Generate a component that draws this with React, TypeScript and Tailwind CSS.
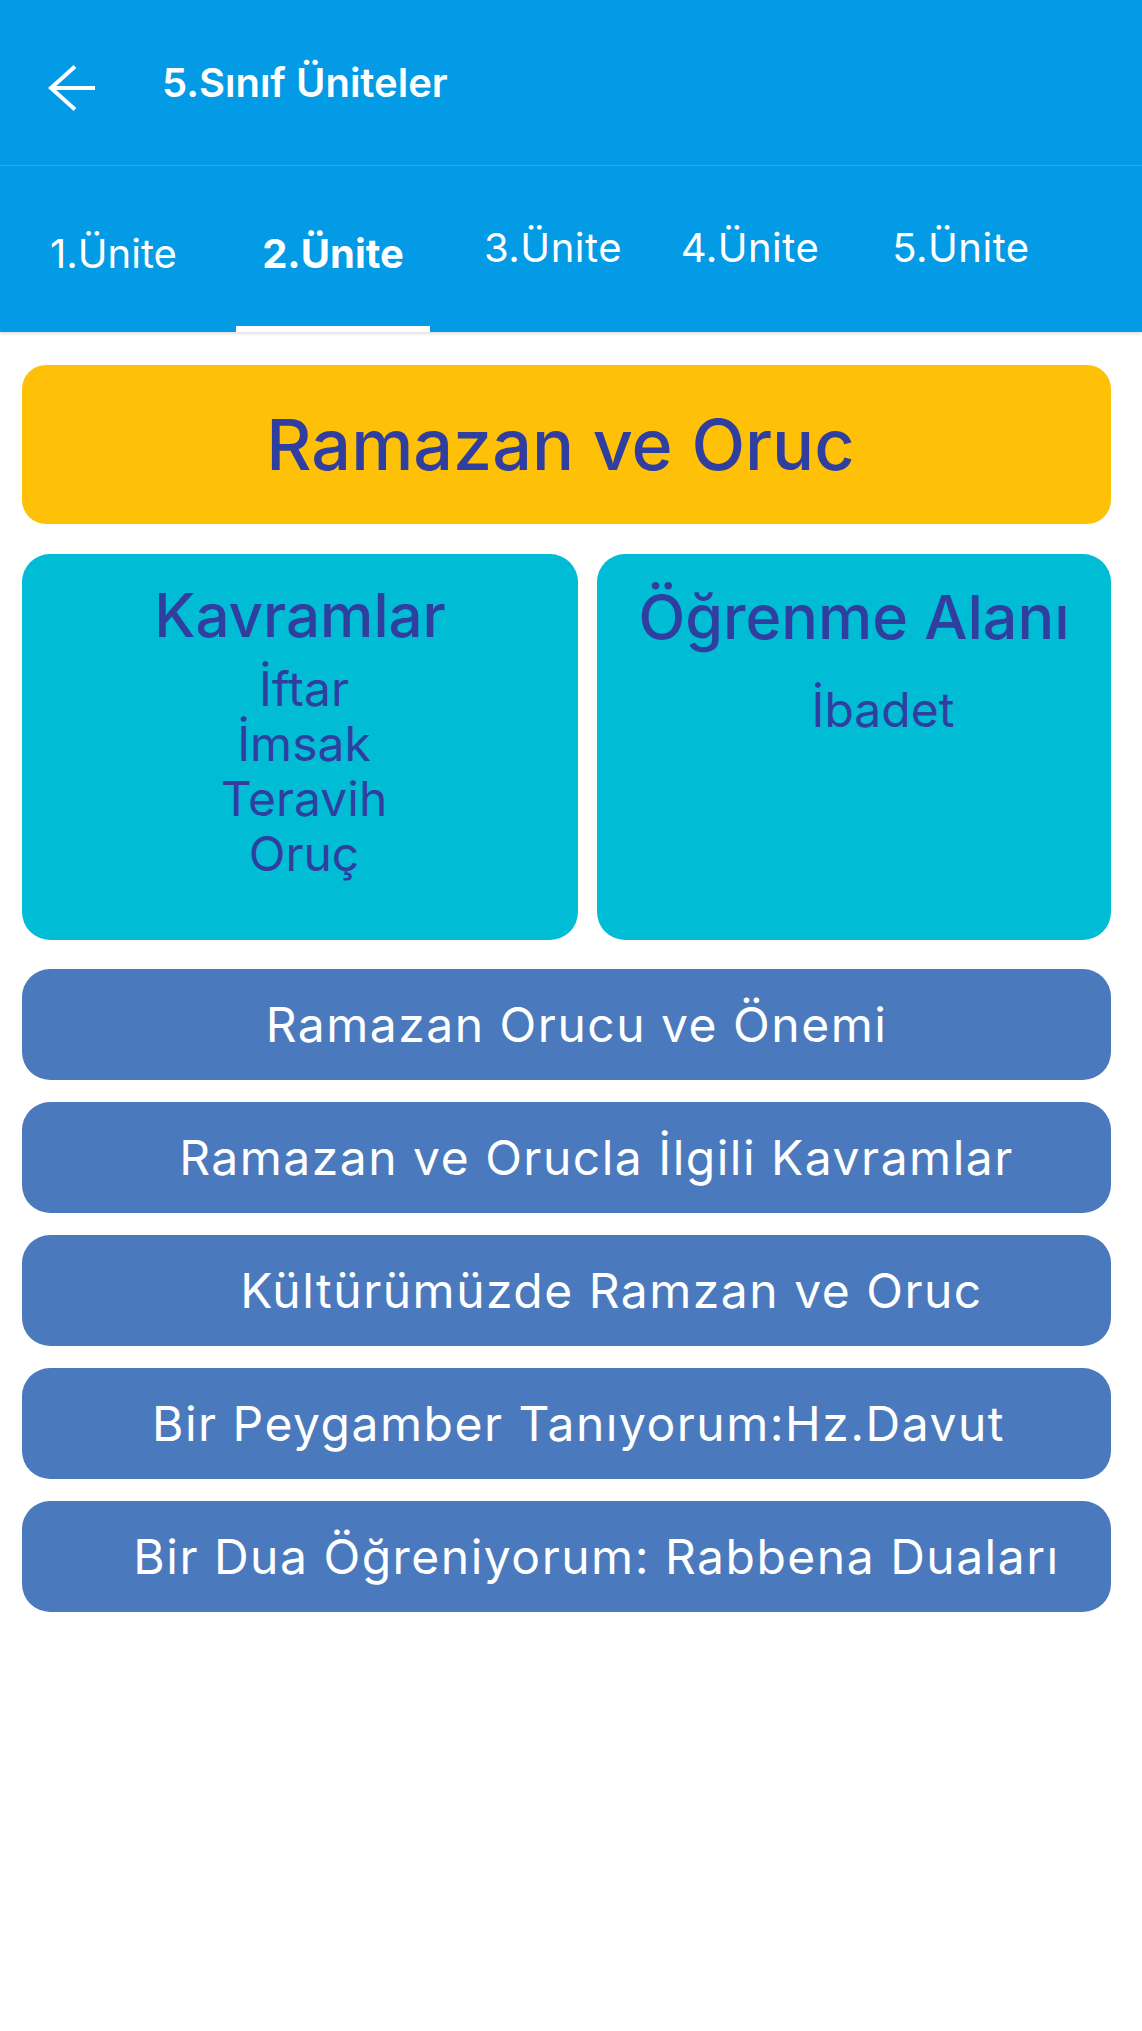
import React from "react";

const tabs = [
  { label: "1.Ünite", box: "w-[236px]", text: "pt-[64px] pr-[9px] font-normal" },
  { label: "2.Ünite", box: "w-[194px]", text: "pt-[64px] font-bold", active: true },
  { label: "3.Ünite", box: "w-[246px]", text: "pt-[58px] font-normal tracking-[0.5px]" },
  { label: "4.Ünite", box: "w-[148px]", text: "pt-[58px] font-normal tracking-[0.5px]" },
  { label: "5.Ünite", box: "w-[274px]", text: "pt-[58px] font-normal tracking-[0.5px]" },
];

const lessons = [
  { title: "Ramazan Orucu ve Önemi", pad: "pl-[20px]" },
  { title: "Ramazan ve Orucla İlgili Kavramlar", pad: "pl-[60px]" },
  { title: "Kültürümüzde Ramzan ve Oruc", pad: "pl-[90px]" },
  { title: "Bir Peygamber Tanıyorum:Hz.Davut", pad: "pl-[24px]" },
  { title: "Bir Dua Öğreniyorum: Rabbena Duaları", pad: "pl-[60px]" },
];

const kavramlar = ["İftar", "İmsak", "Teravih", "Oruç"];

const BackArrow: React.FC = () => (
  <svg width="50" height="50" viewBox="0 0 50 50" fill="none" className="shrink-0">
    <path d="M3 24H47" stroke="white" strokeWidth="4" />
    <path d="M27 2.5L3 24L27 45.5" stroke="white" strokeWidth="4" strokeLinejoin="miter" />
  </svg>
);

const App: React.FC = () => {
  return (
    <div
      className="min-h-[2031px] w-[1142px] bg-white"
      style={{ fontFamily: "Inter, 'Noto Sans', sans-serif" }}
    >
      {/* app bar */}
      <div className="bg-[#039be5] shadow-[0_2px_3px_rgba(0,0,0,0.12)]">
        <div className="flex h-[166px] items-center border-b border-[#2aa9ea] pl-[48px]">
          <div className="mt-[13px]">
            <BackArrow />
          </div>
          <h1 className="ml-[64px] text-[40px] font-semibold leading-[48px] text-white">
            5.Sınıf Üniteler
          </h1>
        </div>

        {/* tabs */}
        <div className="flex h-[166px]">
          {tabs.map((t) => (
            <div key={t.label} className={`flex h-full flex-col justify-between ${t.box}`}>
              <span className={`block text-center text-[40px] leading-[48px] text-white ${t.text}`}>
                {t.label}
              </span>
              <div className={t.active ? "h-[6px] bg-white" : "h-[6px]"} />
            </div>
          ))}
        </div>
      </div>

      {/* content */}
      <div className="flex flex-col pl-[22px] pr-[31px] pt-[33px] text-[#303f9f]">
        <div className="flex h-[159px] items-center justify-center rounded-[24px] bg-[#ffc107] pr-[12px]">
          <span className="text-[70px] font-medium leading-[84px]">Ramazan ve Oruc</span>
        </div>

        <div className="mt-[30px] flex h-[386px] gap-[19px]">
          <div className="flex w-[556px] flex-col items-center rounded-[28px] bg-[#00bcd4] pt-[25px]">
            <span className="text-[60px] font-medium leading-[72px]">Kavramlar</span>
            <div className="mt-[10px] flex flex-col items-center pl-[8px] text-[48px] leading-[55px]">
              {kavramlar.map((k) => (
                <span key={k}>{k}</span>
              ))}
            </div>
          </div>
          <div className="flex flex-1 flex-col items-center rounded-[28px] bg-[#00bcd4] pt-[27px]">
            <span className="text-[61px] font-medium leading-[72px]">Öğrenme Alanı</span>
            <span className="mt-[29px] pl-[58px] text-[48px] leading-[55px]">İbadet</span>
          </div>
        </div>

        <div className="mt-[29px] flex flex-col gap-[22px]">
          {lessons.map((l) => (
            <div
              key={l.title}
              className={`flex h-[111px] items-center justify-center rounded-[28px] bg-[#4a7abd] text-[48px] leading-[58px] tracking-[1.5px] text-white ${l.pad}`}
            >
              {l.title}
            </div>
          ))}
        </div>
      </div>
    </div>
  );
};

export default App;
